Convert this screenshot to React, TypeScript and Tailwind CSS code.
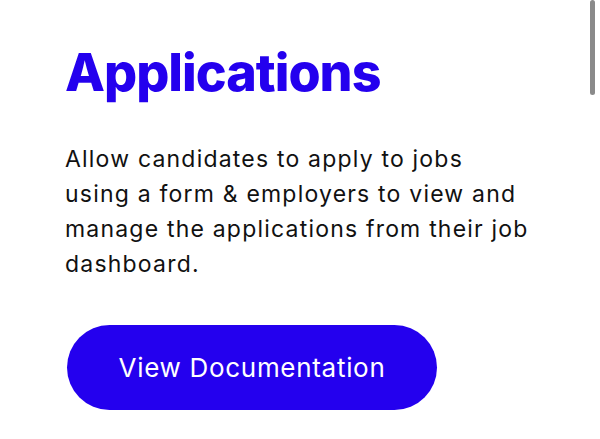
export default function App() {
  return (
    <div className="relative h-[439px] w-[600px] overflow-hidden bg-white">
      <div className="absolute right-[5px] top-0 h-[95px] w-[5px] rounded-full bg-[#8a8a8a]" />
      <section className="flex flex-col pl-[65px] pt-[38px]">
        <h1
          className="text-[52px] font-extrabold leading-[70px] tracking-[-1px] text-[#2400ee]"
          style={{ fontFamily: "Inter, sans-serif" }}
        >
          Applications
        </h1>
        <p
          className="mt-[34px] text-[23px] leading-[35px] tracking-[1.2px] text-[#111]"
          style={{ fontFamily: "Inter, sans-serif" }}
        >
          Allow candidates to apply to jobs
          <br />
          using a form &amp; employers to view and
          <br />
          manage the applications from their job
          <br />
          dashboard.
        </p>
        <button
          type="button"
          className="ml-[2px] mt-[43px] flex h-[85px] w-[370px] items-center justify-center rounded-full bg-[#2400ee] text-[26px] tracking-[0.7px] text-white"
          style={{ fontFamily: "Inter, sans-serif" }}
        >
          View Documentation
        </button>
      </section>
    </div>
  );
}
